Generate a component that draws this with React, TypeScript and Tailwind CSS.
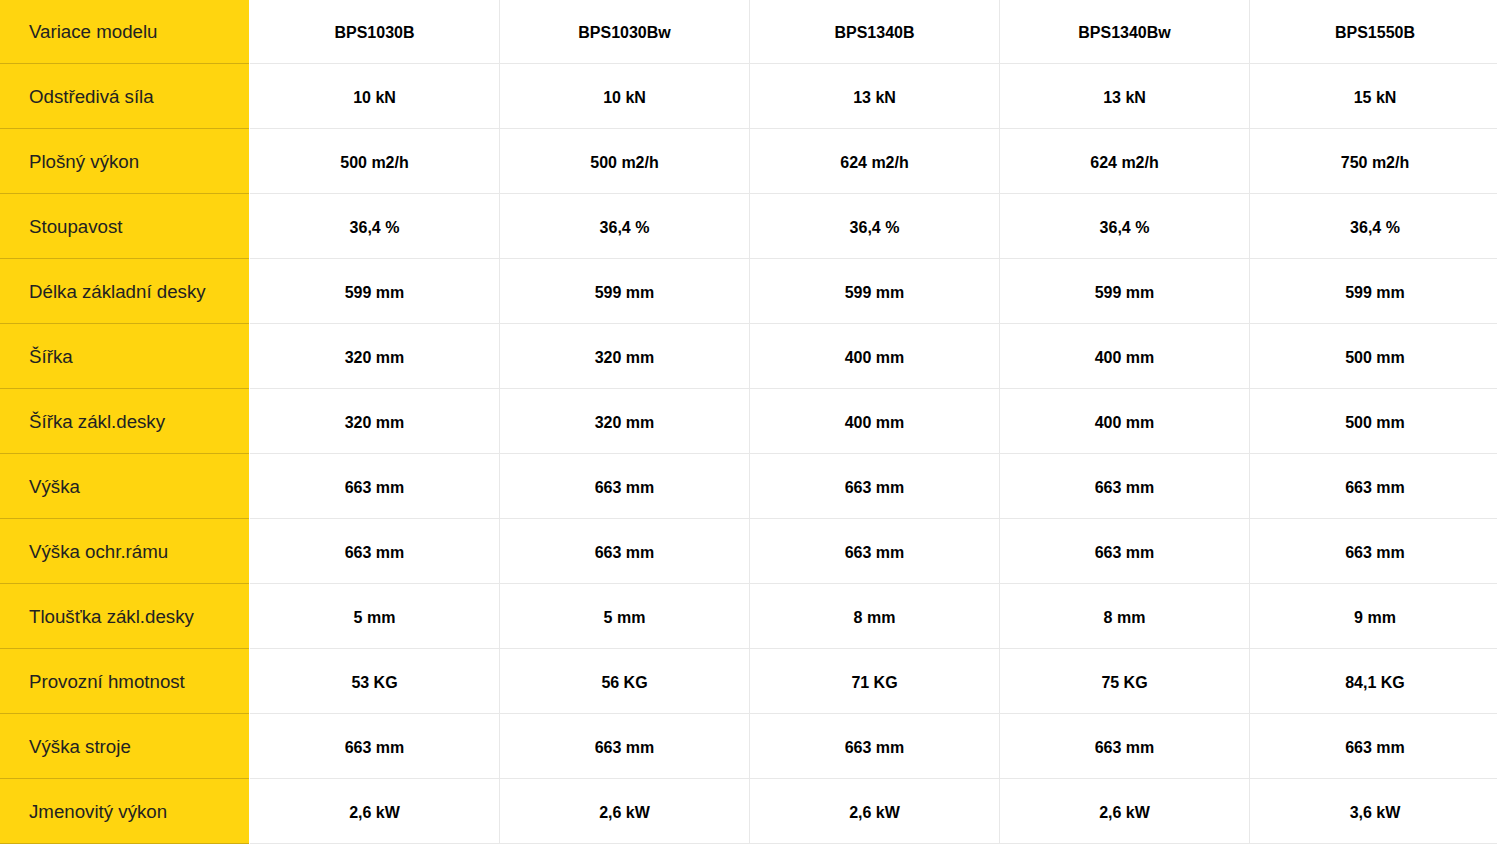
import React from "react";

const models = ["BPS1030B", "BPS1030Bw", "BPS1340B", "BPS1340Bw", "BPS1550B"];

const rows: [string, string[]][] = [
  ["Odstředivá síla", ["10 kN", "10 kN", "13 kN", "13 kN", "15 kN"]],
  ["Plošný výkon", ["500 m2/h", "500 m2/h", "624 m2/h", "624 m2/h", "750 m2/h"]],
  ["Stoupavost", ["36,4 %", "36,4 %", "36,4 %", "36,4 %", "36,4 %"]],
  ["Délka základní desky", ["599 mm", "599 mm", "599 mm", "599 mm", "599 mm"]],
  ["Šířka", ["320 mm", "320 mm", "400 mm", "400 mm", "500 mm"]],
  ["Šířka zákl.desky", ["320 mm", "320 mm", "400 mm", "400 mm", "500 mm"]],
  ["Výška", ["663 mm", "663 mm", "663 mm", "663 mm", "663 mm"]],
  ["Výška ochr.rámu", ["663 mm", "663 mm", "663 mm", "663 mm", "663 mm"]],
  ["Tloušťka zákl.desky", ["5 mm", "5 mm", "8 mm", "8 mm", "9 mm"]],
  ["Provozní hmotnost", ["53 KG", "56 KG", "71 KG", "75 KG", "84,1 KG"]],
  ["Výška stroje", ["663 mm", "663 mm", "663 mm", "663 mm", "663 mm"]],
  ["Jmenovitý výkon", ["2,6 kW", "2,6 kW", "2,6 kW", "2,6 kW", "3,6 kW"]],
];

function Row({ label, values }: { label: string; values: string[] }) {
  return (
    <div className="grid grid-cols-[250px_250px_250px_250px_250px_250px] h-[65px]">
      <div className="bg-[#FFD50F] border-b border-[#D2AE10] mr-px flex items-center pt-[3px] pl-[29px] text-[18.7px] text-[#222]">
        {label}
      </div>
      {values.map((v, i) => (
        <div
          key={i}
          className={
            "flex items-center justify-center pt-[3px] border-b border-[#e8e8e8] text-[16px] font-bold text-black " +
            (i < 4 ? "border-r" : "")
          }
        >
          {v}
        </div>
      ))}
    </div>
  );
}

export default function App() {
  return (
    <div className="w-[1497px] h-[845px] overflow-hidden bg-white font-['Liberation_Sans',Arial,sans-serif]">
      <div className="-mt-px w-[1500px]">
        <Row label="Variace modelu" values={models} />
        {rows.map(([l, v]) => (
          <Row key={l} label={l} values={v} />
        ))}
      </div>
    </div>
  );
}
